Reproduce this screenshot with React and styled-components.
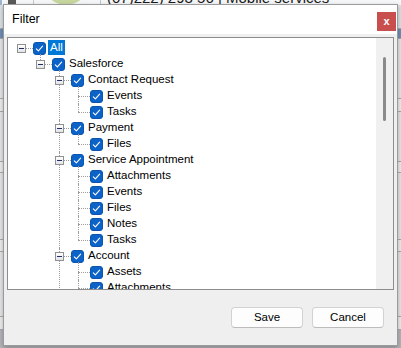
import React from "react";
import styled, { createGlobalStyle } from "styled-components";

const GlobalStyle = createGlobalStyle`
  html, body {
    margin: 0;
    padding: 0;
  }
  body {
    width: 401px;
    height: 348px;
    overflow: hidden;
    font-family: "Liberation Sans", Arial, sans-serif;
  }
`;

/* ---------- app behind the dialog ---------- */

const Screen = styled.div`
  position: relative;
  width: 401px;
  height: 348px;
  overflow: hidden;
  background: #e3e5e8;
  display: flex;
  flex-direction: column;
`;

const TopBar = styled.div`
  flex-shrink: 0;
  height: 30px;
  margin-top: -25px;
  display: flex;
  align-items: flex-end;
  background: #f6f7f8;
  border-left: 2px solid #9fb4cf;
`;

const UserIcon = styled.div`
  width: 8px;
  height: 9px;
  margin-left: 6px;
  border-radius: 4px 4px 0 0;
  background: #5a5a5a;
`;

const BarDivider = styled.div`
  align-self: stretch;
  width: 1px;
  margin-left: ${(p) => p.$gap}px;
  background: #c4c7cc;
`;

const Avatar = styled.div`
  width: 46px;
  height: 46px;
  margin-left: 9px;
  border-radius: 50%;
  background: #c8d79e;
`;

const Phone = styled.span`
  margin-left: 6px;
  font-size: 15px;
  line-height: 15px;
  color: #1a1a1a;
  white-space: nowrap;
`;

const BackList = styled.div`
  display: flex;
  flex-direction: column;
`;

const BackRow = styled.div`
  flex-shrink: 0;
  height: ${(p) => p.$h}px;
  background: ${(p) => p.$bg};
  border-bottom: 1px solid #a8abb0;
  box-sizing: border-box;
`;

const backRows = [
  { h: 24, bg: "#dde2e8" },
  { h: 10, bg: "#6e8fb6" },
  { h: 60, bg: "#e6e7e9" },
  { h: 13, bg: "#eeeeee" },
  { h: 50, bg: "#e6e7e9" },
  { h: 11, bg: "#eeeeee" },
  { h: 67, bg: "#e6e7e9" },
  { h: 12, bg: "#eeeeee" },
  { h: 65, bg: "#e6e7e9" },
  { h: 13, bg: "#eeeeee" },
  { h: 30, bg: "#b4b6b9" },
];

/* ---------- dialog ---------- */

const Dialog = styled.div`
  position: absolute;
  left: 3px;
  top: 4px;
  width: 395px;
  height: 342px;
  box-sizing: border-box;
  border: 1px solid #9b9b9b;
  background: #efefef;
  display: flex;
  flex-direction: column;
  box-shadow: 0 2px 5px rgba(0, 0, 0, 0.28);
`;

const TitleBar = styled.div`
  flex-shrink: 0;
  height: 29px;
  display: flex;
  align-items: flex-start;
  justify-content: space-between;
  background: #ffffff;
`;

const Title = styled.span`
  padding-left: 8px;
  font-size: 12.5px;
  line-height: 29px;
  color: #000;
`;

const CloseButton = styled.button`
  width: 19px;
  height: 19px;
  margin: 7px 1px 0 0;
  padding: 0;
  border: none;
  background: #c94f4f;
  color: #fff;
  font-family: "Liberation Sans", Arial, sans-serif;
  font-size: 11px;
  font-weight: bold;
  line-height: 17px;
  text-align: center;
`;

const Panel = styled.div`
  flex-shrink: 0;
  height: 253px;
  margin: 3px 3px 0;
  box-sizing: border-box;
  border: 1px solid #8d8d8d;
  background: #ffffff;
  display: flex;
`;

const TreeArea = styled.div`
  flex: 1;
  overflow: hidden;
  padding-top: 2px;
`;

const ScrollTrack = styled.div`
  width: 17px;
  flex-shrink: 0;
  background: #f0f0f0;
  padding: 19px 0 0 7px;
  box-sizing: border-box;
`;

const ScrollThumb = styled.div`
  width: 3px;
  height: 64px;
  border-radius: 2px;
  background: #8a8a8a;
`;

const Footer = styled.div`
  flex: 1;
  display: flex;
  justify-content: flex-end;
  align-items: flex-start;
  gap: 9px;
  padding: 17px 13px 0 0;
`;

const Button = styled.button`
  width: 72px;
  height: 21px;
  padding: 0;
  border: 1px solid #d2d2d2;
  border-bottom-color: #bcbcbc;
  border-radius: 4px;
  background: #fdfdfd;
  color: #000;
  font-family: "Liberation Sans", Arial, sans-serif;
  font-size: 11.5px;
  line-height: 19px;
`;

/* ---------- tree ---------- */

const Item = styled.div`
  position: relative;

  &::before {
    content: "";
    display: ${(p) => (p.$root ? "none" : "block")};
    position: absolute;
    left: ${(p) => 13 + 19 * p.$level}px;
    top: ${(p) => (p.$first ? -2 : 0)}px;
    ${(p) => (p.$last ? `height: ${p.$first ? 10 : 8}px;` : "bottom: 0;")}
    border-left: 1px dotted #9c9c9c;
  }
`;

const Row = styled.div`
  position: relative;
  height: 16px;
  display: flex;
  align-items: flex-start;
  padding-left: ${(p) => 4 + 19 * p.$level}px;
`;

const Slot = styled.div`
  position: relative;
  width: 19px;
  height: 16px;
  flex-shrink: 0;

  &::after {
    content: "";
    position: absolute;
    left: 9px;
    right: -2px;
    top: 8px;
    border-top: 1px dotted #9c9c9c;
  }
`;

const Expander = styled.div`
  position: absolute;
  z-index: 1;
  left: 5px;
  top: 4px;
  width: 9px;
  height: 9px;
  box-sizing: border-box;
  border: 1px solid #8f9092;
  background: linear-gradient(#ffffff, #e2e3e5);

  &::after {
    content: "";
    position: absolute;
    left: 1px;
    top: 3px;
    width: 5px;
    height: 1px;
    background: #1f2f63;
  }
`;

const Box = styled.div`
  width: 13px;
  height: 13px;
  margin: 2px 0 0 2px;
  flex-shrink: 0;
  box-sizing: border-box;
  border: 1px solid #0a55b0;
  border-radius: 3px;
  background: #0b62c7;
  display: flex;
  align-items: center;
  justify-content: center;
`;

const Label = styled.span`
  height: 15px;
  margin-left: 2px;
  padding: 0 2px;
  font-size: 11.5px;
  line-height: 15px;
  white-space: nowrap;
  color: ${(p) => (p.$selected ? "#ffffff" : "#000000")};
  background: ${(p) => (p.$selected ? "#0078d7" : "transparent")};
`;

const Check = () => (
  <Box>
    <svg width="11" height="11" viewBox="0 0 11 11">
      <polyline
        points="2.3,5.8 4.4,7.8 8.6,3.2"
        fill="none"
        stroke="#ffffff"
        strokeWidth="1.1"
        strokeLinecap="round"
        strokeLinejoin="round"
      />
    </svg>
  </Box>
);

const leaves = (names) => names.map((label) => ({ label }));

const tree = {
  label: "All",
  selected: true,
  children: [
    {
      label: "Salesforce",
      children: [
        { label: "Contact Request", children: leaves(["Events", "Tasks"]) },
        { label: "Payment", children: leaves(["Files"]) },
        {
          label: "Service Appointment",
          children: leaves(["Attachments", "Events", "Files", "Notes", "Tasks"]),
        },
        {
          label: "Account",
          children: leaves(["Assets", "Attachments", "Events", "Files", "Notes", "Tasks"]),
        },
        {
          label: "Case",
          children: leaves(["Attachments", "Events", "Files", "Notes", "Tasks"]),
        },
        {
          label: "Opportunity",
          children: leaves(["Attachments", "Events", "Notes", "Tasks"]),
        },
      ],
    },
  ],
};

const TreeNode = ({ node, level, first, last }) => {
  const kids = node.children || [];
  return (
    <Item $level={level} $first={first} $last={last} $root={level === 0}>
      <Row $level={level}>
        <Slot>{kids.length > 0 && <Expander />}</Slot>
        <Check />
        <Label $selected={node.selected}>{node.label}</Label>
      </Row>
      {kids.map((child, i) => (
        <TreeNode
          key={`${child.label}-${i}`}
          node={child}
          level={level + 1}
          first={i === 0}
          last={i === kids.length - 1}
        />
      ))}
    </Item>
  );
};

const App = () => (
  <>
    <GlobalStyle />
    <Screen>
      <TopBar>
        <UserIcon />
        <BarDivider $gap={17} />
        <Avatar />
        <BarDivider $gap={11} />
        <Phone>(07)222) 293 56 | Mobile services</Phone>
      </TopBar>
      <BackList>
        {backRows.map((r, i) => (
          <BackRow key={i} $h={r.h} $bg={r.bg} />
        ))}
      </BackList>

      <Dialog>
        <TitleBar>
          <Title>Filter</Title>
          <CloseButton>x</CloseButton>
        </TitleBar>
        <Panel>
          <TreeArea>
            <TreeNode node={tree} level={0} first last />
          </TreeArea>
          <ScrollTrack>
            <ScrollThumb />
          </ScrollTrack>
        </Panel>
        <Footer>
          <Button>Save</Button>
          <Button>Cancel</Button>
        </Footer>
      </Dialog>
    </Screen>
  </>
);

export default App;
